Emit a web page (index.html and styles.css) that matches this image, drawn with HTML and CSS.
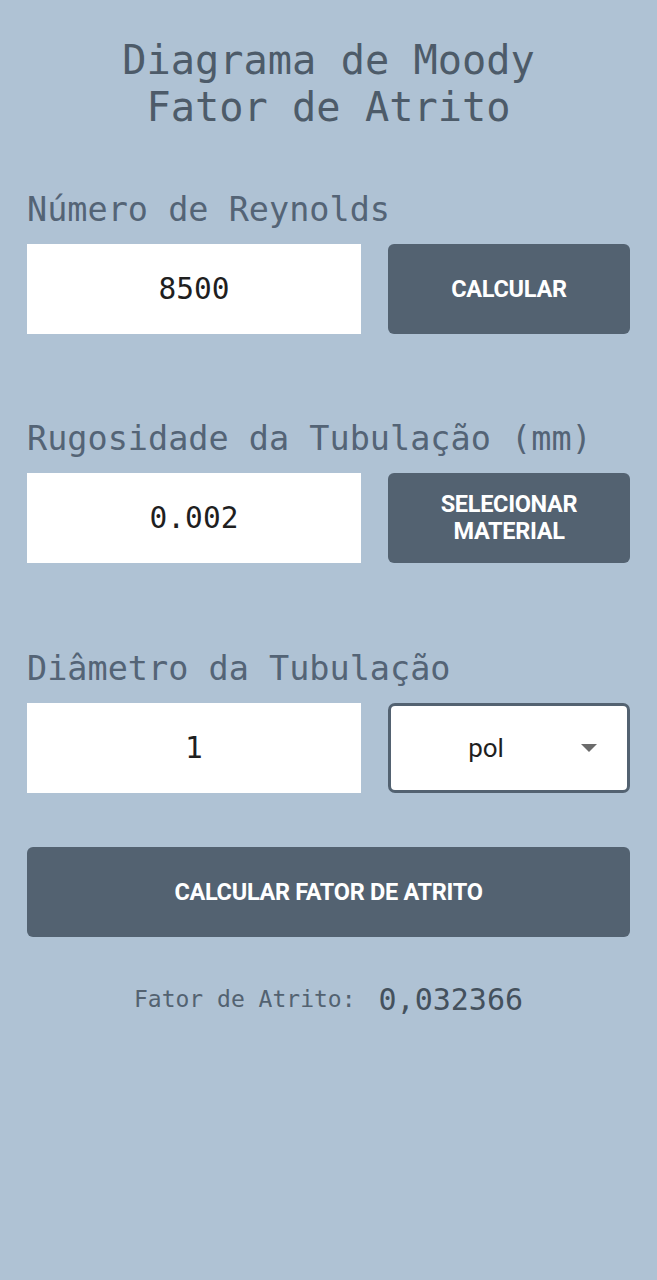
FILE: index.html
```html
<!DOCTYPE html>
<html lang="pt">
<head>
<meta charset="utf-8">
<link rel="stylesheet" href="styles.css">
</head>
<body>
<main class="app">
  <h1 class="title">Diagrama de Moody<br>Fator de Atrito</h1>

  <section class="field first">
    <div class="label">Número de Reynolds</div>
    <div class="row">
      <div class="input">8500</div>
      <button class="btn">CALCULAR</button>
    </div>
  </section>

  <section class="field">
    <div class="label">Rugosidade da Tubulação (mm)</div>
    <div class="row">
      <div class="input">0.002</div>
      <button class="btn">SELECIONAR<br>MATERIAL</button>
    </div>
  </section>

  <section class="field third">
    <div class="label">Diâmetro da Tubulação</div>
    <div class="row">
      <div class="input">1</div>
      <div class="select">
        <span class="select-text">pol</span>
        <svg class="caret" width="16" height="8" viewBox="0 0 16 8"><path d="M0 0 L16 0 L8 8 Z" fill="#6b6b6b"/></svg>
      </div>
    </div>
  </section>

  <button class="btn wide">CALCULAR FATOR DE ATRITO</button>

  <div class="result">
    <span class="result-label">Fator de Atrito:</span>
    <span class="result-value">0,032366</span>
  </div>
</main>
</body>
</html>
```

FILE: styles.css
```css
html, body {
  margin: 0;
  padding: 0;
  background: #afc2d4;
}
body {
  width: 657px;
  height: 1280px;
  font-family: "DejaVu Sans Mono", "Liberation Mono", monospace;
}
.app {
  padding: 37px 27px 0 27px;
  display: flex;
  flex-direction: column;
}
.title {
  margin: 0;
  text-align: center;
  font-weight: normal;
  font-size: 40.3px;
  line-height: 47px;
  color: #4d5b69;
}
.field {
  margin-top: 85px;
}
.field.first {
  margin-top: 59px;
}
.field.third {
  margin-top: 86px;
}
.label {
  font-size: 33.5px;
  line-height: 40px;
  color: #546476;
  white-space: nowrap;
}
.row {
  margin-top: 14px;
  display: flex;
  gap: 27px;
  height: 90px;
}
.input {
  width: 334px;
  background: #ffffff;
  display: flex;
  align-items: center;
  justify-content: center;
  font-size: 29.5px;
  color: #1f1f1f;
}
.btn {
  flex: 1;
  border: none;
  border-radius: 6px;
  background: #536271;
  color: #ffffff;
  font-family: Roboto, "Liberation Sans", sans-serif;
  font-weight: bold;
  font-size: 23.5px;
  line-height: 27px;
  letter-spacing: -0.3px;
  padding: 0;
  margin: 0;
}
.btn.wide {
  flex: none;
  height: 90px;
  margin-top: 54px;
  width: 100%;
}
.select {
  flex: 1;
  box-sizing: border-box;
  background: #ffffff;
  border: 3px solid #536271;
  border-radius: 7px;
  display: flex;
  align-items: center;
  padding: 0 30px 0 0;
}
.select-text {
  flex: 1;
  text-align: center;
  font-family: Roboto, "Liberation Sans", sans-serif;
  font-size: 26px;
  color: #1f1f1f;
}
.caret {
  display: block;
}
.result {
  margin-top: 42px;
  height: 40px;
  display: flex;
  align-items: center;
  justify-content: center;
  gap: 23px;
}
.result-label {
  font-size: 23px;
  color: #536271;
}
.result-value {
  font-size: 30px;
  color: #44515d;
}
```
